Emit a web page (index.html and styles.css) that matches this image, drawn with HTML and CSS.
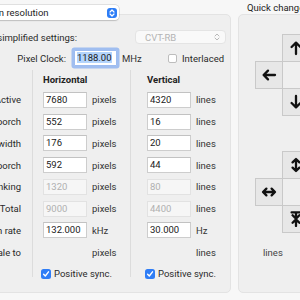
FILE: index.html
```html
<!DOCTYPE html>
<html lang="en">

<head>
    <meta charset="UTF-8">
    <title>Screen resolution</title>
    <link rel="stylesheet" href="styles.css">
</head>

<body>
    <div class="window">
        <div class="main-col">
            <div class="box-title">
                <div class="popup main-popup">
                    <span class="popup-text">Screen resolution</span>
                    <span class="stepper">
                        <svg width="10" height="10" viewBox="0 0 10 10">
                            <path d="M3 4L5 2L7 4M3 6L5 8L7 6" fill="none" stroke="#fff" stroke-width="1.2" stroke-linecap="round" stroke-linejoin="round"/>
                        </svg>
                    </span>
                </div>
            </div>

            <div class="group main-group">
                <div class="top-row">
                    <span class="top-label simp-label">Use simplified settings:</span>
                    <div class="popup popup-disabled">
                        <span class="popup-text">CVT-RB</span>
                        <svg width="8" height="10" viewBox="0 0 8 10">
                            <path d="M2 4L4 2L6 4M2 6L4 8L6 6" fill="none" stroke="#b8b8b8" stroke-width="1" stroke-linecap="round" stroke-linejoin="round"/>
                        </svg>
                    </div>
                </div>

                <div class="top-row clock-row">
                    <span class="top-label clock-label">Pixel Clock:</span>
                    <span class="field focused"><span class="sel">1188.00</span></span>
                    <span class="unit mhz">MHz</span>
                    <span class="check"></span>
                    <span class="check-label">Interlaced</span>
                </div>

                <div class="timing">
                    <div class="col labels">
                        <div class="head"></div>
                        <div class="row">Active</div>
                        <div class="row">Front porch</div>
                        <div class="row">Sync width</div>
                        <div class="row">Back porch</div>
                        <div class="row">Blanking</div>
                        <div class="row">Total</div>
                        <div class="row">Scan rate</div>
                        <div class="row">Scale to</div>
                        <div class="row"></div>
                    </div>

                    <div class="col horiz">
                        <div class="head">Horizontal</div>
                        <div class="row"><span class="field">7680</span><span class="unit">pixels</span></div>
                        <div class="row"><span class="field">552</span><span class="unit">pixels</span></div>
                        <div class="row"><span class="field">176</span><span class="unit">pixels</span></div>
                        <div class="row"><span class="field">592</span><span class="unit">pixels</span></div>
                        <div class="row"><span class="field disabled">1320</span><span class="unit">pixels</span></div>
                        <div class="row"><span class="field disabled">9000</span><span class="unit">pixels</span></div>
                        <div class="row"><span class="field">132.000</span><span class="unit">kHz</span></div>
                        <div class="row"><span class="unit no-field">pixels</span></div>
                        <div class="row">
                            <span class="check checked">
                                <svg width="10" height="10" viewBox="0 0 10 10">
                                    <path d="M2.6 5.2L4.3 7L7.5 2.8" fill="none" stroke="#fff" stroke-width="1.4" stroke-linecap="round" stroke-linejoin="round"/>
                                </svg>
                            </span>
                            <span class="check-label">Positive sync.</span>
                        </div>
                    </div>

                    <div class="col vert">
                        <div class="head">Vertical</div>
                        <div class="row"><span class="field">4320</span><span class="unit">lines</span></div>
                        <div class="row"><span class="field">16</span><span class="unit">lines</span></div>
                        <div class="row"><span class="field">20</span><span class="unit">lines</span></div>
                        <div class="row"><span class="field">44</span><span class="unit">lines</span></div>
                        <div class="row"><span class="field disabled">80</span><span class="unit">lines</span></div>
                        <div class="row"><span class="field disabled">4400</span><span class="unit">lines</span></div>
                        <div class="row"><span class="field">30.000</span><span class="unit">Hz</span></div>
                        <div class="row"><span class="unit no-field">lines</span></div>
                        <div class="row">
                            <span class="check checked">
                                <svg width="10" height="10" viewBox="0 0 10 10">
                                    <path d="M2.6 5.2L4.3 7L7.5 2.8" fill="none" stroke="#fff" stroke-width="1.4" stroke-linecap="round" stroke-linejoin="round"/>
                                </svg>
                            </span>
                            <span class="check-label">Positive sync.</span>
                        </div>
                    </div>
                </div>
            </div>
        </div>

        <div class="side-col">
            <div class="side-title">Quick change</div>
            <div class="group side-group">
                <!-- move -->
                <div class="pad">
                    <div class="cell c2 r1">
                        <svg width="16" height="16" viewBox="0 0 16 16"><path d="M8 14V2.8M3.6 7L8 2.6L12.4 7"/></svg>
                    </div>
                    <div class="cell c1 r2">
                        <svg width="16" height="16" viewBox="0 0 16 16"><path d="M14 8H2.8M7 3.6L2.6 8L7 12.4"/></svg>
                    </div>
                    <div class="cell c3 r2">
                        <svg width="16" height="16" viewBox="0 0 16 16"><path d="M2 8H13.2M9 3.6L13.4 8L9 12.4"/></svg>
                    </div>
                    <div class="cell c2 r3">
                        <svg width="16" height="16" viewBox="0 0 16 16"><path d="M8 2V13.2M3.6 9L8 13.4L12.4 9"/></svg>
                    </div>
                </div>

                <!-- resize -->
                <div class="pad">
                    <div class="cell c2 r1">
                        <svg width="16" height="16" viewBox="0 0 16 16"><path d="M8 2.2V13.8M4.6 5.4L8 2L11.4 5.4M4.6 10.6L8 14L11.4 10.6"/></svg>
                    </div>
                    <div class="cell c1 r2">
                        <svg width="16" height="16" viewBox="0 0 16 16"><path d="M2.2 8H13.8M5.4 4.6L2 8L5.4 11.4M10.6 4.6L14 8L10.6 11.4"/></svg>
                    </div>
                    <div class="cell c3 r2">
                        <svg width="16" height="16" viewBox="0 0 16 16"><path d="M1 8H7M4.2 4.6L7.6 8L4.2 11.4M15 8H9M11.8 4.6L8.4 8L11.8 11.4"/></svg>
                    </div>
                    <div class="cell c2 r3">
                        <svg width="16" height="16" viewBox="0 0 16 16"><path d="M3.6 1.4H12.4M8 1.4V7M4.6 4.2L8 7.6L11.4 4.2M8 15V9M4.6 11.8L8 8.4L11.4 11.8"/></svg>
                    </div>
                </div>

                <div class="side-unit">lines</div>
            </div>
        </div>
    </div>
</body>

</html>
```

FILE: styles.css
```css
body {
    margin: 0;
    width: 300px;
    height: 300px;
    overflow: hidden;
    background-color: #f7f7f7;
    font-family: Roboto, "Liberation Sans", sans-serif;
    font-size: 9.5px;
    color: #2a2a2a;
}

.window {
    display: flex;
    gap: 7px;
    margin-left: -60px;
}

.main-col {
    flex: none;
    width: 291px;
}

.side-col {
    flex: none;
    width: 120px;
}

/* group boxes */

.group {
    box-sizing: border-box;
    height: 279px;
    border: 1px solid #e3e3e3;
    border-radius: 5px;
    background-color: #efefef;
}

.box-title {
    position: relative;
    z-index: 1;
    box-sizing: border-box;
    height: 21px;
    padding-top: 5px;
}

.main-group {
    margin-top: -7px;
    padding-top: 13px;
}

.side-title {
    height: 14px;
    line-height: 14px;
    padding-left: 9px;
    padding-top: 1px;
    box-sizing: border-box;
    color: #222;
}

.side-group {
    padding: 19px 0 0 16px;
}

/* popups */

.popup {
    box-sizing: border-box;
    display: flex;
    align-items: center;
    justify-content: space-between;
    border-radius: 4px;
}

.main-popup {
    margin-left: 27px;
    width: 152px;
    height: 15px;
    padding: 0 2px 0 8px;
    background-color: #fff;
    box-shadow: 0 0 0 0.5px rgba(0, 0, 0, 0.18), 0 1px 1.5px rgba(0, 0, 0, 0.12);
    color: #1e1e1e;
}

.stepper {
    display: flex;
    align-items: center;
    justify-content: center;
    width: 10px;
    height: 10px;
    border-radius: 3px;
    background-color: #2d7df6;
}

.popup-disabled {
    margin-left: 58px;
    width: 91px;
    height: 14px;
    padding: 0 4px 0 9px;
    border: 1px solid #e4e4e4;
    background-color: #f9f9f9;
    color: #b4b4b4;
}

/* top rows */

.top-row {
    display: flex;
    align-items: center;
    height: 18px;
}

.clock-row {
    height: 20px;
    margin-top: 2px;
}

.top-label {
    flex: none;
    box-sizing: border-box;
    text-align: right;
    white-space: nowrap;
}

.simp-label {
    width: 136px;
}

.clock-label {
    width: 125px;
}

.field {
    flex: none;
    box-sizing: border-box;
    width: 44px;
    height: 16px;
    line-height: 14px;
    padding-left: 2px;
    border: 1px solid #cdcdcd;
    border-top-color: #c2c2c2;
    background-color: #fff;
    color: #1a1a1a;
    white-space: nowrap;
}

.field.disabled {
    border-color: #e2e2e2;
    background-color: #f6f6f6;
    color: #b0b0b0;
}

.field.focused {
    margin-left: 8px;
    width: 43px;
    border-color: #9dbcf0;
    border-radius: 1px;
    box-shadow: 0 0 0 2.5px rgba(95, 150, 240, 0.55);
}

.sel {
    background-color: #b3d4fc;
}

.unit {
    margin-left: 5px;
    color: #333;
    white-space: nowrap;
}

.unit.mhz {
    margin-left: 5px;
    width: 46px;
}

.unit.no-field {
    margin-left: 49px;
}

.check {
    flex: none;
    display: flex;
    align-items: center;
    justify-content: center;
    box-sizing: border-box;
    width: 9px;
    height: 9px;
    border: 1px solid #bdbdbd;
    border-radius: 2px;
    background-color: #fff;
}

.check.checked {
    width: 10px;
    height: 10px;
    margin-left: -2px;
    border: none;
    border-radius: 2.5px;
    background-color: #2f7df6;
}

.check-label {
    margin-left: 5px;
    white-space: nowrap;
}

.check.checked + .check-label {
    margin-left: 3px;
}

/* timing table */

.timing {
    display: flex;
    height: 207px;
    margin-top: 2px;
}

.col {
    box-sizing: border-box;
    flex: none;
}

.col .head {
    height: 19px;
    line-height: 19px;
    font-weight: bold;
    color: #222;
}

.col .row {
    display: flex;
    align-items: center;
    height: 21.75px;
    white-space: nowrap;
}

.labels {
    width: 91px;
    padding-right: 11px;
}

.labels .row {
    justify-content: flex-end;
}

.horiz {
    width: 98px;
    padding-left: 10px;
    border-left: 1px solid #dcdcdc;
}

.vert {
    width: 100px;
    padding-left: 16px;
    border-left: 1px solid #dcdcdc;
}

/* quick change pads */

.pad {
    display: grid;
    grid-template-columns: repeat(3, 27px);
    grid-template-rows: repeat(3, 27px);
}

.pad + .pad {
    margin-top: 36px;
}

.cell {
    box-sizing: border-box;
    display: flex;
    align-items: center;
    justify-content: center;
    width: 28px;
    height: 28px;
    border: 1px solid #c9c9c9;
    background-color: #e7e7e7;
}

.cell svg path {
    fill: none;
    stroke: #111;
    stroke-width: 2.3;
    stroke-linecap: round;
    stroke-linejoin: round;
}

.c1 { grid-column: 1; }
.c2 { grid-column: 2; }
.c3 { grid-column: 3; }
.r1 { grid-row: 1; }
.r2 { grid-row: 2; }
.r3 { grid-row: 3; }

.side-unit {
    margin: 15px 0 0 8px;
    line-height: 12px;
    color: #444;
}
```
